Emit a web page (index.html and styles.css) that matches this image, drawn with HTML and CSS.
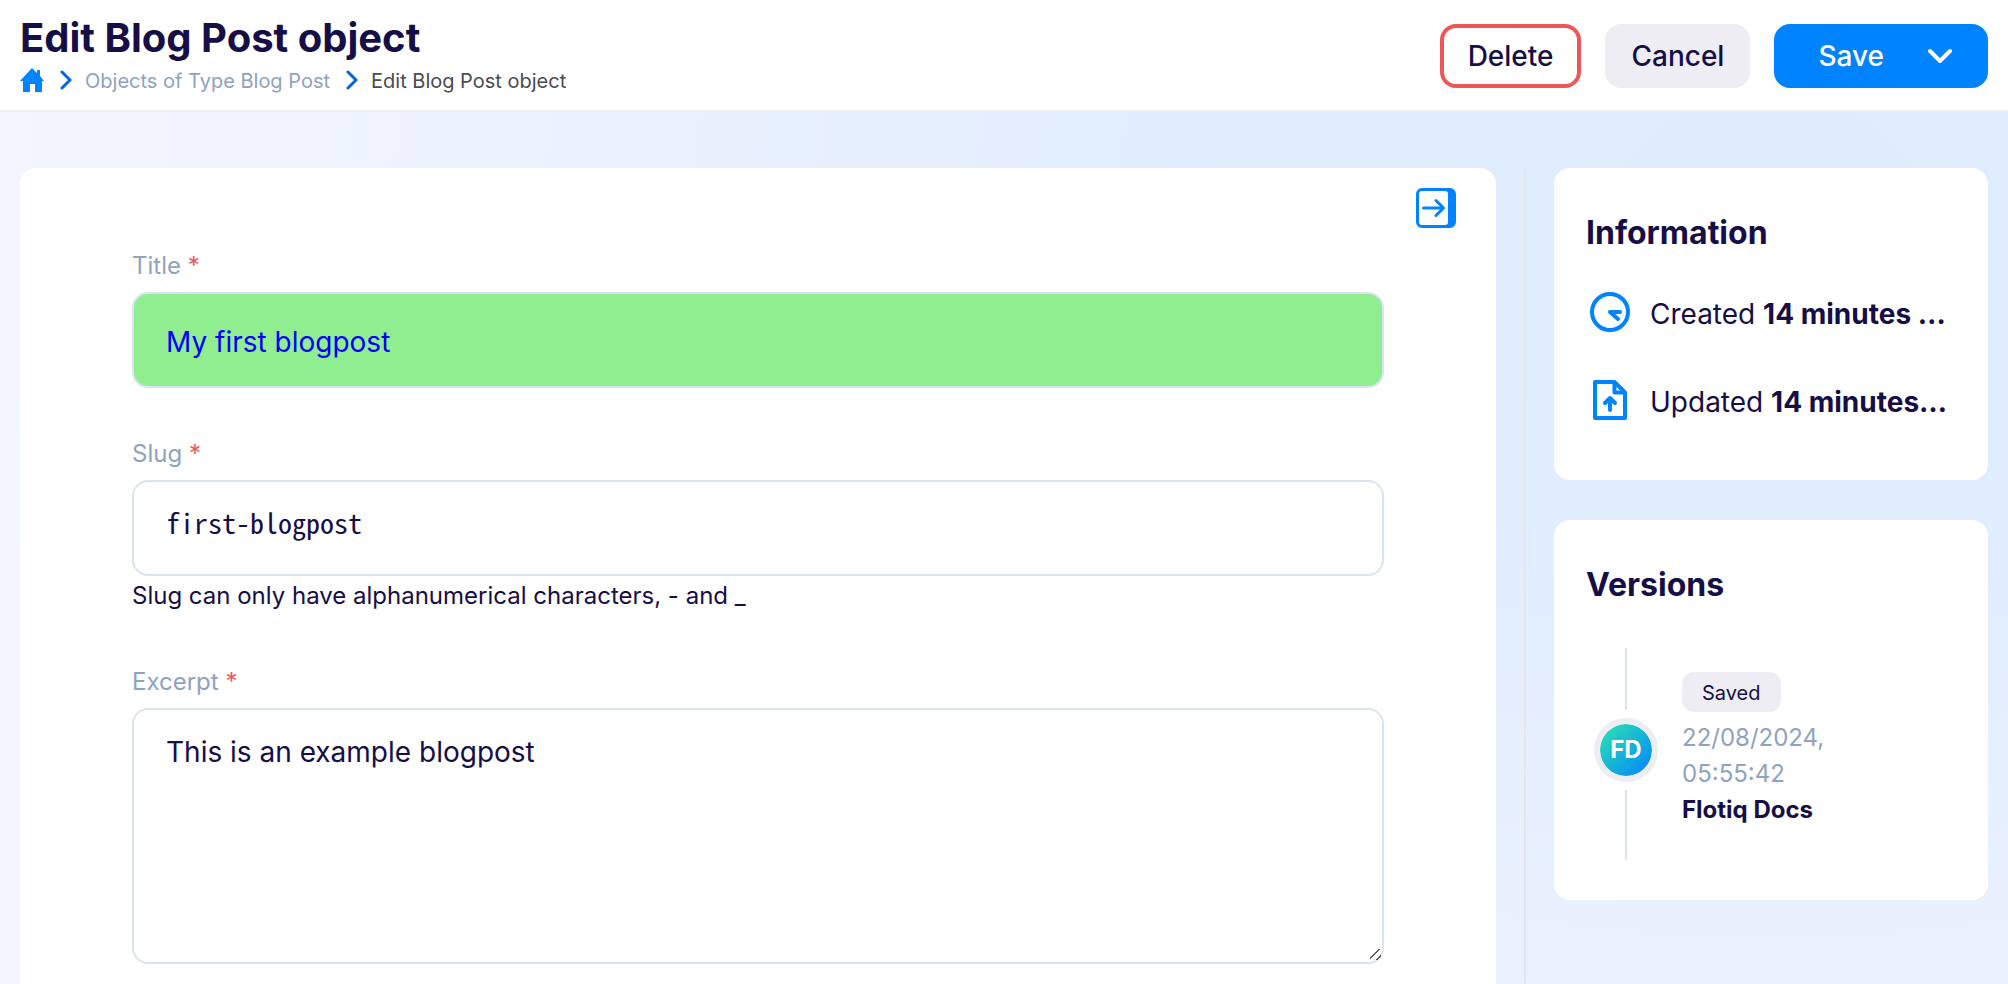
FILE: index.html
```html
<!DOCTYPE html>
<html lang="en">
<head>
<meta charset="utf-8">
<meta name="viewport" content="width=device-width, initial-scale=1">
<title>Edit Blog Post object</title>
<link rel="stylesheet" href="styles.css">
</head>
<body>
<header class="topbar">
  <div class="heading">
    <h1 class="page-title">Edit Blog Post object</h1>
    <nav class="breadcrumbs" aria-label="Breadcrumb">
      <a class="crumb-home" href="#" aria-label="Home">
        <svg width="24" height="24" viewBox="0 0 24 24" fill="#0083ff"><path d="M12 0l5 5V2h3v6l4 5h-2v11h-7v-8h-5v8H3V13H0z"/></svg>
      </a>
      <svg class="crumb-sep" width="12" height="20" viewBox="0 0 12 20" fill="none" stroke="#0064e6" stroke-width="3" stroke-linecap="round" stroke-linejoin="round"><path d="m2 2 8 8-8 8"/></svg>
      <a class="crumb" href="#">Objects of Type Blog Post</a>
      <svg class="crumb-sep" width="12" height="20" viewBox="0 0 12 20" fill="none" stroke="#0064e6" stroke-width="3" stroke-linecap="round" stroke-linejoin="round"><path d="m2 2 8 8-8 8"/></svg>
      <span class="crumb crumb-current">Edit Blog Post object</span>
    </nav>
  </div>
  <div class="actions">
    <button class="btn btn-delete" type="button">Delete</button>
    <button class="btn btn-cancel" type="button">Cancel</button>
    <button class="btn btn-save" type="button">Save
      <svg width="24" height="16" viewBox="0 0 24 16" fill="none" stroke="#fff" stroke-width="4" stroke-linecap="round" stroke-linejoin="round"><path d="m2 3 10 10L22 3"/></svg>
    </button>
  </div>
</header>
<main class="layout">
  <form class="card editor">
    <button class="collapse" type="button" aria-label="Collapse sidebar">
      <svg width="40" height="40" viewBox="0 0 40 40"><path fill="#0083ff" fill-rule="evenodd" d="M6 0h28a6 6 0 0 1 6 6v28a6 6 0 0 1-6 6H6a6 6 0 0 1-6-6V6a6 6 0 0 1 6-6zM6 3a3 3 0 0 0-3 3v28a3 3 0 0 0 3 3h23a3 3 0 0 0 3-3V6a3 3 0 0 0-3-3z"/><path d="M7.500 20h20M20 12.500l7.500 7.500-7.500 7.500" fill="none" stroke="#0083ff" stroke-width="3" stroke-linecap="round" stroke-linejoin="round"/></svg>
    </button>
    <div class="field">
      <label class="label" for="title">Title <span class="required">*</span></label>
      <input class="control control-title" id="title" type="text" value="My first blogpost">
    </div>
    <div class="field">
      <label class="label" for="slug">Slug <span class="required">*</span></label>
      <input class="control control-slug" id="slug" type="text" value="first-blogpost">
      <p class="hint">Slug can only have alphanumerical characters, - and _</p>
    </div>
    <div class="field">
      <label class="label" for="excerpt">Excerpt <span class="required">*</span></label>
      <textarea class="control control-area" id="excerpt">This is an example blogpost</textarea>
    </div>
  </form>
  <aside class="sidebar">
    <section class="card panel">
      <h2 class="panel-title">Information</h2>
      <ul class="facts">
        <li class="fact">
          <svg class="fact-icon" width="48" height="48" viewBox="0 0 48 48" fill="none" stroke="#0083ff" stroke-width="4" stroke-linecap="round" stroke-linejoin="round"><circle cx="24" cy="24" r="18"/><path d="M34 24H24l8 7"/></svg>
          <span class="fact-text">Created <strong>14 minutes …</strong></span>
        </li>
        <li class="fact">
          <svg class="fact-icon" width="48" height="48" viewBox="0 0 48 48" fill="none" stroke="#0083ff" stroke-width="4" stroke-linejoin="round"><path d="M9 6h19.500L39 16.500V42H9z"/><path d="M28.500 6v10.500H39"/><path d="M24 34V22m-5 5 5-5 5 5" stroke-linecap="round"/></svg>
          <span class="fact-text">Updated <strong>14 minutes…</strong></span>
        </li>
      </ul>
    </section>
    <section class="card panel">
      <h2 class="panel-title">Versions</h2>
      <div class="version">
        <div class="rail"><span class="avatar">FD</span></div>
        <div class="version-body">
          <span class="badge">Saved</span>
          <time class="version-date">22/08/2024, 05:55:42</time>
          <strong class="version-author">Flotiq Docs</strong>
        </div>
      </div>
    </section>
  </aside>
</main>
</body>
</html>
```
FILE: styles.css
```css
*,
*::before,
*::after {
  box-sizing: border-box;
}

body {
  margin: 0;
  height: 100vh;
  overflow: hidden;
  display: flex;
  flex-direction: column;
  background: #e9f2fe;
  color: #160e46;
  font-family: Inter, "Liberation Sans", sans-serif;
  font-size: 24px;
  font-weight: 400;
  line-height: 36px;
}

h1,
h2,
p,
ul {
  margin: 0;
  padding: 0;
}

strong {
  font-weight: 700;
}

button {
  font: inherit;
  color: inherit;
  cursor: pointer;
}

svg {
  display: block;
  flex: none;
}

.topbar {
  flex: none;
  display: flex;
  align-items: center;
  justify-content: space-between;
  padding: 18px 20px 16px;
  background: #fff;
  border-bottom: 2px solid #eeedf4;
}

.page-title {
  font-size: 40px;
  line-height: 40px;
  font-weight: 700;
}

.breadcrumbs {
  margin-top: 8px;
  display: flex;
  align-items: center;
  font-size: 20px;
  line-height: 26px;
}

.crumb-sep {
  margin: 0 13px 0 16px;
}

.crumb {
  padding-top: 2px;
  color: #8ea3be;
  text-decoration: none;
}

.crumb-current {
  color: #4b4b50;
}

.actions {
  display: flex;
  gap: 24px;
}

.btn {
  display: flex;
  align-items: center;
  height: 64px;
  padding: 0 24px;
  border: 4px solid transparent;
  border-radius: 16px;
  font-size: 28px;
  font-weight: 500;
}

.btn-delete {
  background: #fff;
  border-color: #ee5757;
}

.btn-cancel {
  padding: 0 22px;
  background: #eeedf4;
  border-color: #eeedf4;
}

.btn-save {
  gap: 44px;
  padding: 0 32px 0 40px;
  background: #0083ff;
  border-color: #0083ff;
  color: #fff;
}

.layout {
  flex: 1;
  min-height: 0;
  display: grid;
  grid-template-columns: minmax(0, 1fr) 464px;
  gap: 28px;
  padding: 56px 20px 0;
  background: radial-gradient(ellipse 95% 150% at 88% 10%, #dfecfe 0%, #e0edfe 25%, #eaf1fe 60%, #eef3fe 75%, #f4f7ff 100%);
}

.card {
  background: #fff;
  border-radius: 16px;
}

.editor {
  position: relative;
  padding: 80px 112px 0;
  border-radius: 16px 16px 0 0;
}

.collapse {
  position: absolute;
  top: 20px;
  right: 40px;
  padding: 0;
  border: 0;
  background: none;
}

.field {
  margin-bottom: 48px;
}

.label {
  display: block;
  margin-bottom: 8px;
  color: #8ea3be;
}

.required {
  color: #ee5757;
}

.control {
  display: block;
  width: 100%;
  height: 96px;
  padding: 0 32px;
  border: 2px solid #dae3f2;
  border-radius: 16px;
  background: #fff;
  color: inherit;
  font: inherit;
  font-size: 28px;
  line-height: 40px;
}

.control-title {
  padding-top: 4px;
  background: lightgreen;
  color: blue;
}

.control-slug {
  padding-bottom: 12px;
  font-family: "Noto Sans Mono CJK JP", "Noto Sans Mono CJK SC", "Liberation Mono", monospace;
}

.control-area {
  height: 256px;
  padding: 22px 32px;
  resize: vertical;
}

.control-area::-webkit-resizer {
  background: linear-gradient(135deg, transparent 40%, #555 41%, #555 49%, transparent 50%, transparent 73%, #555 74%, #555 82%, transparent 83%) 3px 2px / 11px 11px no-repeat;
}

.hint {
  line-height: 40px;
}

.sidebar {
  display: flex;
  flex-direction: column;
  gap: 40px;
  padding-left: 28px;
  border-left: 2px solid #e6e6e9;
}

.panel {
  padding: 40px 32px;
}

.panel-title {
  font-size: 32px;
  line-height: 50px;
  font-weight: 700;
}

.facts {
  list-style: none;
  display: flex;
  flex-direction: column;
  gap: 40px;
  padding: 30px 0 16px;
}

.fact {
  display: flex;
  align-items: center;
  gap: 16px;
  font-size: 28px;
  line-height: 48px;
}

.fact-text {
  min-width: 0;
  padding-top: 2px;
  margin-bottom: -2px;
  white-space: nowrap;
}

.version {
  display: flex;
  gap: 24px;
  margin-top: 38px;
}

.rail {
  display: flex;
  flex-direction: column;
  align-items: center;
  gap: 8px;
  margin-left: 8px;
}

.rail::before,
.rail::after {
  content: "";
  width: 2px;
  background: #dae3f2;
}

.rail::before {
  height: 62px;
}

.rail::after {
  flex: 1;
}

.avatar {
  display: flex;
  align-items: center;
  justify-content: center;
  width: 64px;
  height: 64px;
  border: 6px solid #eeedf4;
  border-radius: 50%;
  background: linear-gradient(135deg, #2ee6ad 0%, #0083ff 100%) padding-box;
  color: #fff;
  font-weight: 700;
}

.version-body {
  display: flex;
  flex-direction: column;
  align-items: flex-start;
  max-width: 200px;
  padding: 24px 0 32px;
}

.badge {
  margin-bottom: 8px;
  padding: 2px 20px 0;
  border-radius: 12px;
  background: #eeedf4;
  font-size: 20px;
  line-height: 38px;
}

.version-date {
  color: #8ea3be;
}
```
